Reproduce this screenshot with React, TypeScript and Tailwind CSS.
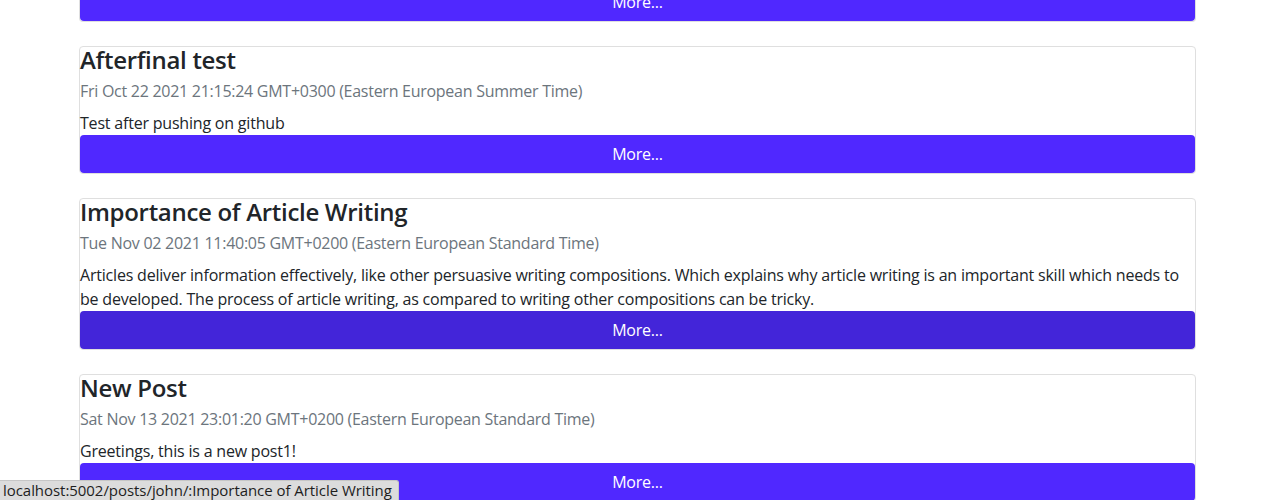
const posts = [
  {
    title: "Afterfinal test",
    date: "Fri Oct 22 2021 21:15:24 GMT+0300 (Eastern European Summer Time)",
    body: "Test after pushing on github",
  },
  {
    title: "Importance of Article Writing",
    date: "Tue Nov 02 2021 11:40:05 GMT+0200 (Eastern European Standard Time)",
    body:
      "Articles deliver information effectively, like other persuasive writing compositions. Which explains why article writing is an important skill which needs to be developed. The process of article writing, as compared to writing other compositions can be tricky.",
    hover: true,
  },
  {
    title: "New Post",
    date: "Sat Nov 13 2021 23:01:20 GMT+0200 (Eastern European Standard Time)",
    body: "Greetings, this is a new post1!",
  },
];

function MoreButton({ hover }: { hover?: boolean }) {
  return (
    <button
      type="button"
      className={`block w-full h-[38px] rounded-[4px] text-white text-[16px] leading-[24px] tracking-[-0.2px] ${
        hover ? "bg-[#4325d9]" : "bg-[#5028ff]"
      }`}
    >
      More...
    </button>
  );
}

export default function App() {
  return (
    <div className="relative h-[500px] overflow-hidden bg-white text-[#212529] font-['Open_Sans',sans-serif]">
      <div className="w-[1117px] ml-[79px]">
        {/* previous card, scrolled mostly out of view */}
        <div className="-mt-[17px] border border-t-0 border-[#dfdfdf] rounded-b-[4px]">
          <MoreButton />
        </div>

        {posts.map((p) => (
          <div
            key={p.title}
            className="mt-[24px] border border-[#dfdfdf] rounded-[4px] bg-white"
          >
            <h3 className="text-[24px] leading-[26px] font-semibold tracking-[-0.3px] pb-[6px]">
              {p.title}
            </h3>
            <p className="text-[16px] leading-[24px] tracking-[-0.27px] text-[#6c757d]">
              {p.date}
            </p>
            <p className="mt-[8px] text-[16px] leading-[24px] tracking-[-0.2px]">{p.body}</p>
            <MoreButton hover={p.hover} />
          </div>
        ))}
      </div>

      <div className="absolute left-0 bottom-0 h-[20px] pl-[3px] pr-[6px] bg-[#dcdcdc] border-t border-r border-[#c6c6c6] rounded-tr-[3px] text-[15px] leading-[19px] tracking-[-0.05px] text-[#1e1e1e]">
        localhost:5002/posts/john/:Importance of Article Writing
      </div>
    </div>
  );
}
